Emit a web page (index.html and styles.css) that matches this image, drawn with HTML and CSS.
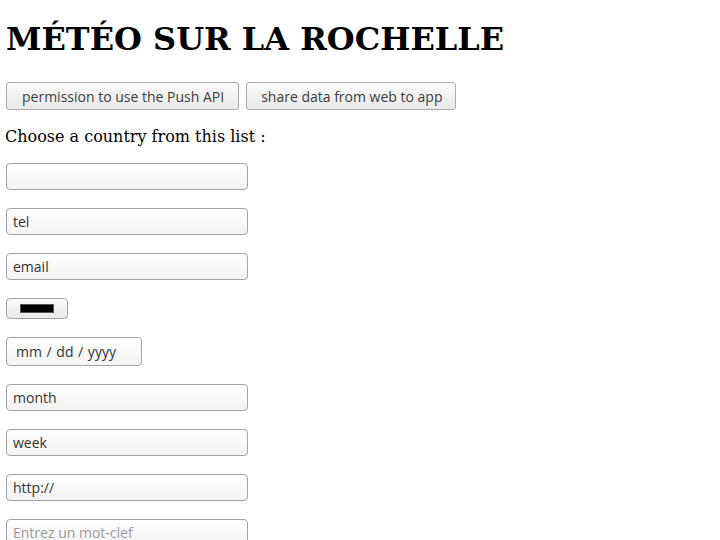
FILE: index.html
```html
<!DOCTYPE html>
<html lang="fr">
<head>
<meta charset="utf-8">
<title>Météo sur La Rochelle</title>
<link rel="stylesheet" href="styles.css">
</head>
<body>
<main class="page">
  <h1 class="title">MÉTÉO SUR LA ROCHELLE</h1>
  <div class="actions">
    <button class="btn" type="button">permission to use the Push API</button>
    <button class="btn" type="button">share data from web to app</button>
  </div>
  <p class="label">Choose a country from this list :</p>
  <div class="fields">
    <input class="field" type="text" value="">
    <input class="field" type="text" value="tel">
    <input class="field" type="text" value="email">
    <div class="color"><span class="swatch"></span></div>
    <div class="date">mm / dd / yyyy</div>
    <input class="field" type="text" value="month">
    <input class="field" type="text" value="week">
    <input class="field" type="text" value="http://">
    <input class="field" type="text" placeholder="Entrez un mot-clef">
  </div>
</main>
</body>
</html>
```

FILE: styles.css
```css
html, body {
  margin: 0;
  padding: 0;
  background: #ffffff;
}

.page {
  padding: 21px 0 0 6px;
  font-family: "DejaVu Serif", serif;
  color: #000;
}

.title {
  margin: 0;
  font-size: 32px;
  font-weight: bold;
  line-height: 37px;
}

.actions {
  display: flex;
  gap: 7px;
  margin-top: 24px;
}

.btn {
  height: 28px;
  padding: 0 14px 0 15px;
  border: 1px solid #ababab;
  border-radius: 3px;
  background: linear-gradient(#fbfbfb, #e9e9e9);
  font-family: "Open Sans", "DejaVu Sans", sans-serif;
  font-size: 14px;
  color: #3c3c3c;
}

.btn + .btn {
  padding: 0 13px 0 14px;
}

.label {
  margin: 17px 0 0 -1px;
  font-size: 16px;
  line-height: 19px;
}

.fields {
  display: flex;
  flex-direction: column;
  align-items: flex-start;
  gap: 18px;
  margin-top: 17px;
}

.field {
  box-sizing: border-box;
  width: 242px;
  height: 27px;
  margin: 0;
  padding: 0 6px;
  border: 1px solid #a3a3a3;
  border-radius: 4px;
  background: linear-gradient(#ffffff, #f3f3f3);
  font-family: "Open Sans", "DejaVu Sans", sans-serif;
  font-size: 14px;
  color: #333;
  outline: none;
}

.field::placeholder {
  color: #9a9a9a;
}

.color {
  box-sizing: border-box;
  width: 62px;
  height: 21px;
  border: 1px solid #a3a3a3;
  border-radius: 4px;
  background: linear-gradient(#fbfbfb, #e9e9e9);
  display: flex;
  align-items: center;
  justify-content: center;
}

.swatch {
  width: 34px;
  height: 9px;
  background: #000;
  border: 1px solid #555;
  box-sizing: border-box;
}

.date {
  box-sizing: border-box;
  width: 136px;
  height: 29px;
  padding: 0 9px;
  border: 1px solid #a3a3a3;
  border-radius: 4px;
  background: linear-gradient(#ffffff, #f3f3f3);
  font-family: "Open Sans", "DejaVu Sans", sans-serif;
  font-size: 14px;
  word-spacing: 1px;
  line-height: 27px;
  color: #333;
}
```
